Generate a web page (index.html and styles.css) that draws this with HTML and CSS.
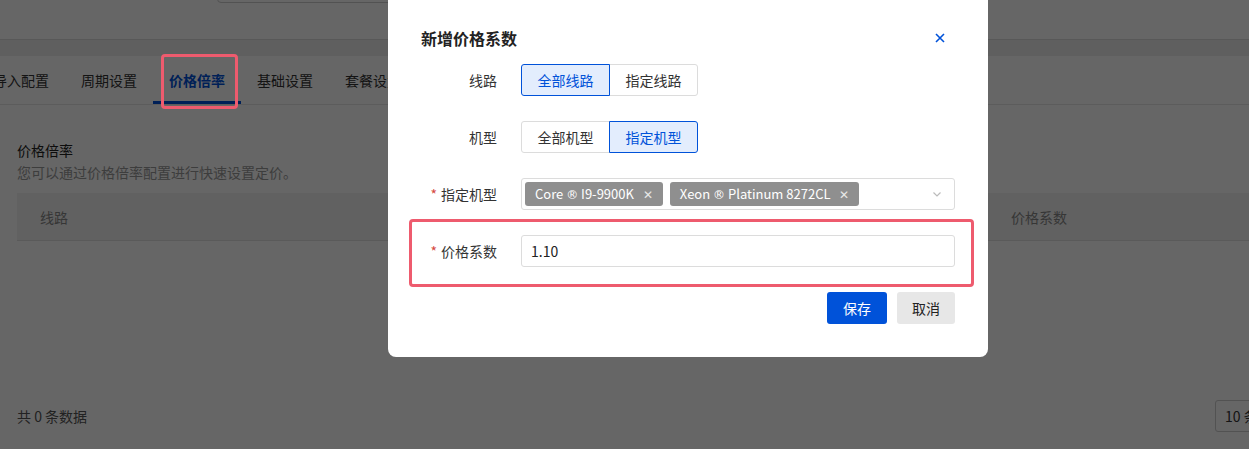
FILE: index.html
```html
<!DOCTYPE html>
<html lang="zh-CN">
<head>
  <meta charset="UTF-8" />
  <title>价格倍率</title>
  <link rel="stylesheet" href="styles.css">
</head>
<body>

  <!-- PAGE BEHIND THE DIALOG -->
  <div class="topbar">
    <div class="search-box"></div>
  </div>
  <div class="strip"></div>

  <div class="card">
    <div class="tabs">
      <div class="tab">导入配置</div>
      <div class="tab">周期设置</div>
      <div class="tab active">价格倍率</div>
      <div class="tab">基础设置</div>
      <div class="tab">套餐设置</div>
    </div>

    <div class="content">
      <div class="section-title">价格倍率</div>
      <div class="section-desc">您可以通过价格倍率配置进行快速设置定价。</div>

      <div class="table-head">
        <div class="th">线路</div>
        <div class="th th-rate">价格系数</div>
      </div>
      <div class="table-body"></div>

      <div class="pager">
        <span>共 0 条数据</span>
        <div class="page-size">10 条/页</div>
      </div>
    </div>
  </div>

  <div class="mask"></div>
  <div class="mark mark-tab"></div>

  <!-- DIALOG -->
  <div class="dialog">
    <div class="dialog-header">
      <span class="dialog-title">新增价格系数</span>
      <svg class="close" width="12" height="12" viewBox="0 0 12 12">
        <path d="M2 2 L10 10 M10 2 L2 10" stroke="#0052d9" stroke-width="1.6" fill="none"/>
      </svg>
    </div>

    <div class="form-row">
      <label class="form-label">线路</label>
      <div class="radio-group">
        <div class="radio-btn checked">全部线路</div>
        <div class="radio-btn">指定线路</div>
      </div>
    </div>

    <div class="form-row">
      <label class="form-label">机型</label>
      <div class="radio-group">
        <div class="radio-btn">全部机型</div>
        <div class="radio-btn checked">指定机型</div>
      </div>
    </div>

    <div class="form-row">
      <label class="form-label"><span class="req">*</span>指定机型</label>
      <div class="select">
        <span class="tag">Core <span class="reg">®</span> I9-9900K <i class="tag-x">✕</i></span>
        <span class="tag">Xeon <span class="reg">®</span> Platinum 8272CL <i class="tag-x">✕</i></span>
        <svg class="arrow" width="12" height="12" viewBox="0 0 12 12">
          <path d="M2.5 4.5 L6 8 L9.5 4.5" stroke="#bbb" stroke-width="1.2" fill="none"/>
        </svg>
      </div>
    </div>

    <div class="form-row">
      <label class="form-label"><span class="req">*</span>价格系数</label>
      <div class="input">1.10</div>
    </div>

    <div class="dialog-footer">
      <button class="btn btn-primary">保存</button>
      <button class="btn btn-default">取消</button>
    </div>

    <div class="mark mark-rate"></div>
  </div>

</body>
</html>
```

FILE: styles.css
```css
* {
  box-sizing: border-box;
}

html, body {
  height: 100%;
}

body {
  margin: 0;
  overflow: hidden;
  background: #fff;
  color: #333;
  font-family: "Noto Sans CJK SC", "Noto Sans", sans-serif;
  font-size: 14px;
  line-height: 22px;
}

/* Page behind */
.topbar {
  display: flow-root;
  height: 40px;
  background: #fff;
  border-bottom: 1px solid #dcdcdc;
}

.search-box {
  width: 320px;
  height: 34px;
  margin: -31px 0 0 217px;
  border: 1px solid #ccc;
  border-radius: 4px;
}

.strip {
  height: 16px;
  background: #eee;
}

.card {
  background: #fff;
}

.tabs {
  display: flex;
  height: 49px;
  margin-left: -23px;
  border-bottom: 1px solid #e7e7e7;
}

.tab {
  padding: 0 16px;
  line-height: 48px;
  color: #333;
  white-space: nowrap;
}

.tab.active {
  color: #0052d9;
  font-weight: bold;
  border-bottom: 3px solid #0052d9;
}

.content {
  padding: 34px 0 0 17px;
}

.section-title {
  color: #222;
}

.section-desc {
  color: #999;
}

.table-head {
  display: flex;
  height: 48px;
  margin-top: 10px;
  background: #f3f3f3;
  border-bottom: 1px solid #e0e0e0;
  align-items: center;
  color: #888;
}

.th {
  padding-left: 23px;
}

.th-rate {
  margin-left: auto;
  width: 238px;
  padding-left: 0;
}

.table-body {
  height: 159px;
}

.pager {
  display: flex;
  justify-content: space-between;
  align-items: center;
  color: #555;
}

.page-size {
  width: 60px;
  height: 32px;
  margin-right: -26px;
  padding-left: 9px;
  border: 1px solid #ccc;
  border-radius: 3px;
  line-height: 30px;
  white-space: nowrap;
  overflow: hidden;
  color: #333;
}

.mask {
  position: fixed;
  inset: 0;
  background: rgba(0, 0, 0, 0.6);
}

/* Annotation frames */
.mark {
  position: absolute;
  border: 3px solid #ee5b6e;
  border-radius: 4px;
}

.mark-tab {
  left: 161px;
  top: 54px;
  width: 77px;
  height: 55px;
}

.mark-rate {
  left: 21px;
  top: 229px;
  width: 565px;
  height: 68px;
}

/* Dialog */
.dialog {
  position: absolute;
  left: 388px;
  top: -10px;
  width: 600px;
  padding: 34px 33px 33px 33px;
  background: #fff;
  border-radius: 8px;
}

.dialog-header {
  display: flex;
  justify-content: space-between;
  align-items: center;
  height: 28px;
  margin-bottom: 12px;
}

.dialog-title {
  font-size: 16px;
  font-weight: bold;
  color: #222;
}

.close {
  margin-right: 9px;
}

.form-row {
  display: flex;
  align-items: center;
  height: 32px;
  margin-bottom: 25px;
}

.form-label {
  width: 76px;
  margin-right: 24px;
  text-align: right;
  color: #333;
  white-space: nowrap;
}

.req {
  color: #d54941;
  margin-right: 4px;
}

.radio-group {
  display: flex;
}

.radio-btn {
  width: 89px;
  height: 32px;
  line-height: 30px;
  text-align: center;
  border: 1px solid #dcdcdc;
  background: #fff;
  color: #333;
}

.radio-btn:first-child {
  border-radius: 3px 0 0 3px;
}

.radio-btn:last-child {
  border-radius: 0 3px 3px 0;
  margin-left: -1px;
}

.radio-btn.checked {
  position: relative;
  border-color: #0052d9;
  background: #e3edfd;
  color: #0052d9;
}

.select {
  position: relative;
  display: flex;
  align-items: center;
  gap: 7px;
  width: 434px;
  height: 32px;
  padding-left: 3px;
  border: 1px solid #dcdcdc;
  border-radius: 3px;
}

.tag {
  height: 24px;
  padding: 0 10px;
  background: #8f8f8f;
  color: #fff;
  border-radius: 3px;
  font-size: 13px;
  line-height: 24px;
  white-space: nowrap;
}

.reg {
  font-family: "DejaVu Sans", sans-serif;
  font-size: 12px;
}

.tag-x {
  font-style: normal;
  font-size: 12px;
  margin-left: 6px;
  color: #e8e8e8;
}

.arrow {
  position: absolute;
  right: 11px;
  top: 9px;
}

.input {
  width: 434px;
  height: 32px;
  padding-left: 9px;
  border: 1px solid #dcdcdc;
  border-radius: 3px;
  line-height: 30px;
  color: #222;
}

.dialog-footer {
  display: flex;
  justify-content: flex-end;
  gap: 10px;
}

.btn {
  height: 32px;
  padding: 0 15px;
  border: none;
  border-radius: 3px;
  font-family: inherit;
  font-size: 14px;
  cursor: pointer;
}

.btn-primary {
  width: 60px;
  background: #0052d9;
  color: #fff;
}

.btn-default {
  width: 58px;
  background: #e7e7e7;
  color: #222;
}
```
